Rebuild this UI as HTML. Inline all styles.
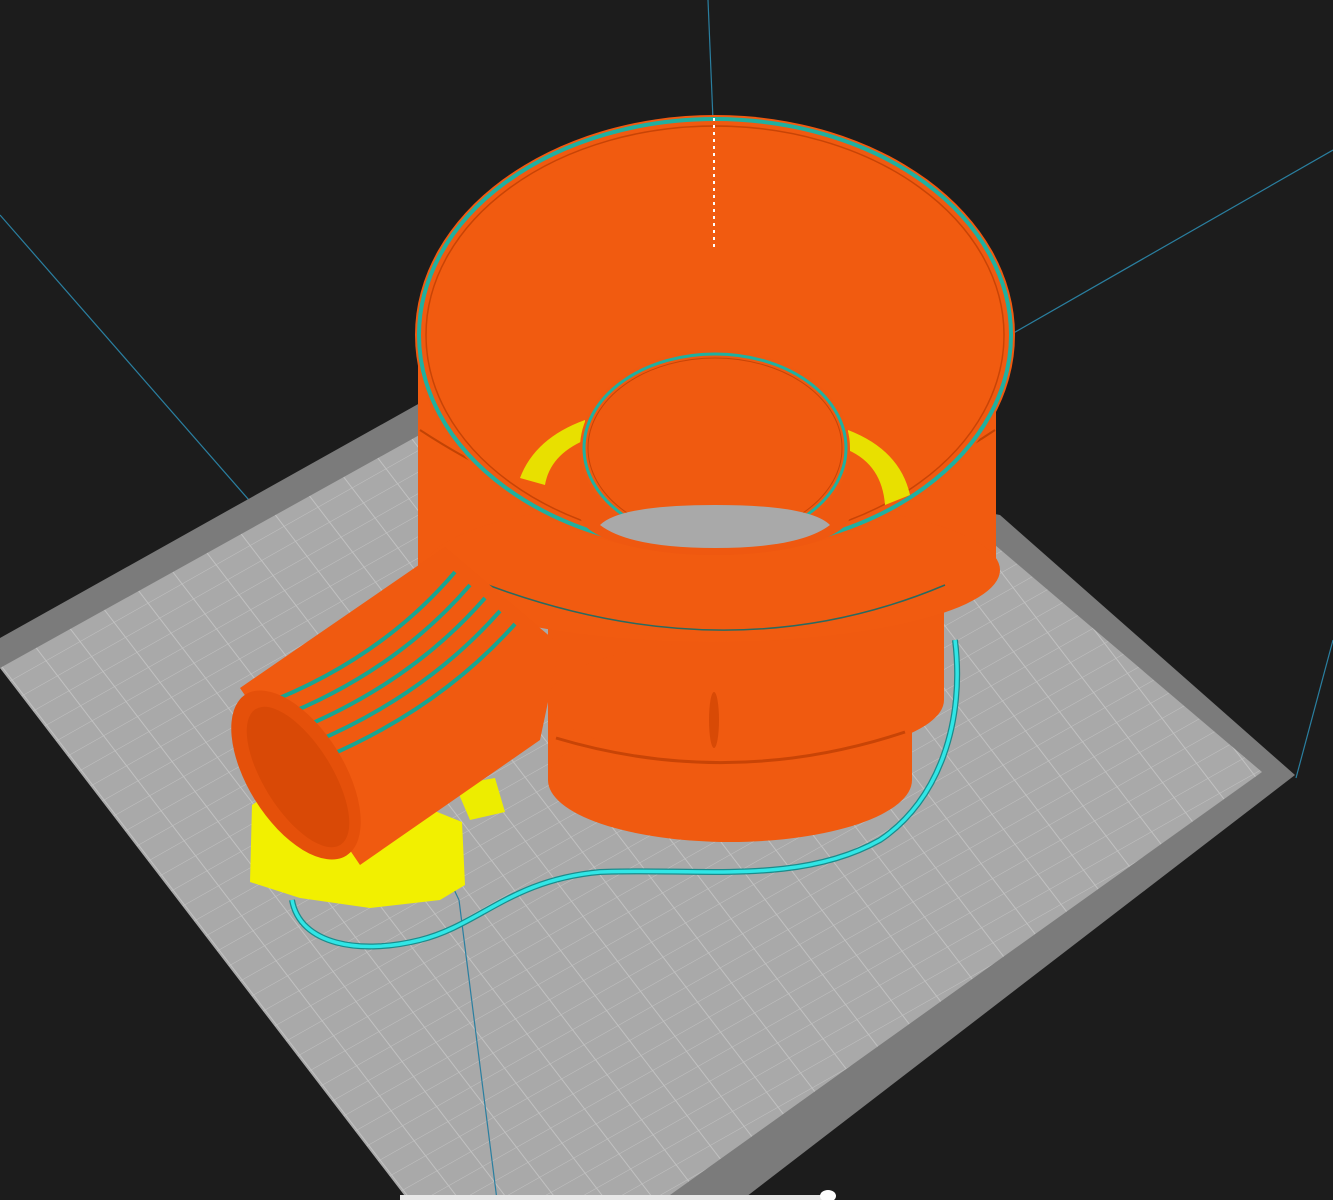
<!DOCTYPE html>
<html><head><meta charset="utf-8"><style>
html,body{margin:0;padding:0;background:#1c1c1c;width:1333px;height:1200px;overflow:hidden}
svg{display:block}
</style></head><body>
<svg width="1333" height="1200" viewBox="0 0 1333 1200" xmlns="http://www.w3.org/2000/svg">
<defs>
<pattern id="grid" width="1" height="1" patternUnits="userSpaceOnUse" patternTransform="matrix(34 -19.2 11.5 15 0 665)">
<rect width="1" height="1" fill="#a9a9a9"/>
<path d="M0 0H1M0 0V1" stroke="#c2c2c2" stroke-width="0.05" fill="none"/>
</pattern>
</defs>
<rect width="1333" height="1200" fill="#1c1c1c"/>
<g stroke="#2a7fa0" stroke-width="1.2" fill="none">
<line x1="708" y1="0" x2="713" y2="120"/>
<line x1="0" y1="215" x2="345" y2="610"/>
<line x1="1010" y1="335" x2="1333" y2="150"/>
<line x1="1333" y1="640" x2="1296" y2="778"/>
</g>
<polygon points="0,638 420,403 1000,515 1295,775 742,1200 408,1200 0,668" fill="#7b7b7b"/>
<polygon points="0,668 432,428 995,545 1262,772 663,1200 408,1200" fill="url(#grid)"/>
<line x1="459" y1="900" x2="497" y2="1200" stroke="#2a7fa0" stroke-width="1.2"/>
<line x1="440" y1="860" x2="459" y2="900" stroke="#2a7fa0" stroke-width="1.2"/>
<path d="M292 900 C300 945 360 955 420 940 C480 925 510 880 600 872 C700 868 800 885 880 840 C940 800 965 720 955 640" fill="none" stroke="#1b8c8c" stroke-width="6"/>
<path d="M292 900 C300 945 360 955 420 940 C480 925 510 880 600 872 C700 868 800 885 880 840 C940 800 965 720 955 640" fill="none" stroke="#30e6e6" stroke-width="3.5"/>
<polygon points="252,805 300,772 345,830 420,805 462,822 465,885 440,900 370,908 300,898 250,882" fill="#f2f000"/>
<polygon points="455,785 495,778 505,812 470,820" fill="#eded00"/>
<rect x="548" y="690" width="364" height="90" fill="#f05a10"/>
<ellipse cx="730" cy="780" rx="182" ry="62" fill="#f05a10"/>
<rect x="548" y="580" width="396" height="120" fill="#f05a10"/>
<ellipse cx="746" cy="700" rx="198" ry="60" fill="#f05a10"/>
<path d="M556 738 Q730 790 905 732" stroke="#c84406" stroke-width="3" fill="none"/>
<rect x="418" y="335" width="578" height="245" fill="#f15b10"/>
<ellipse cx="712" cy="570" rx="288" ry="72" fill="#f15b10"/>
<path d="M420 430 Q710 620 995 430" stroke="#c24304" stroke-width="2" fill="none"/>
<path d="M462 575 Q720 680 945 585" stroke="#2a6a60" stroke-width="1.5" fill="none"/>
<ellipse cx="714" cy="720" rx="5" ry="28" fill="#d84a06"/>
<ellipse cx="715" cy="335" rx="300" ry="220" fill="#f05a10"/>
<ellipse cx="715" cy="335" rx="296" ry="216" fill="none" stroke="#20b0a0" stroke-width="4"/>
<ellipse cx="715" cy="335" rx="289" ry="209" fill="#f15b10" stroke="#c84406" stroke-width="1.5"/>
<!-- yellow crescents -->
<path d="M520 478 Q535 438 585 420 L585 440 Q550 455 545 485 Z" fill="#e8e000"/>
<path d="M910 495 Q900 450 848 430 L848 450 Q882 465 885 505 Z" fill="#e8e000"/>
<path d="M580 448 L580 515 A135 40 0 0 0 850 515 L850 448 Z" fill="#ef5810"/>
<ellipse cx="715" cy="448" rx="135" ry="98" fill="#f05a10"/>
<ellipse cx="715" cy="448" rx="131" ry="94" fill="none" stroke="#20b0a0" stroke-width="3"/>
<ellipse cx="715" cy="448" rx="127" ry="90" fill="none" stroke="#c84406" stroke-width="1"/>
<path d="M600 525 Q620 505 715 505 Q810 505 830 525 Q800 548 715 548 Q630 548 600 525 Z" fill="#a9a9a9"/>
<line x1="714" y1="118" x2="714" y2="248" stroke="#ffffff" stroke-width="2" stroke-dasharray="3 4"/>
<polygon points="240,688 445,547 560,645 540,740 360,865" fill="#f05a10"/>
<g stroke="#18a592" stroke-width="4" fill="none">
<path d="M262 705 Q380 660 455 572"/><path d="M278 718 Q395 672 470 585"/><path d="M294 731 Q410 684 485 598"/><path d="M310 744 Q425 696 500 611"/><path d="M326 757 Q440 708 515 624"/>
</g>
<ellipse cx="296" cy="775" rx="48" ry="95" transform="rotate(-32 296 775)" fill="#e5500a"/>
<ellipse cx="298" cy="777" rx="34" ry="80" transform="rotate(-32 298 777)" fill="#d94906"/>
<rect x="400" y="1195" width="425" height="5" fill="#e8e8e8"/>
<ellipse cx="828" cy="1196" rx="8" ry="6" fill="#fff"/>
</svg>
</body></html>
